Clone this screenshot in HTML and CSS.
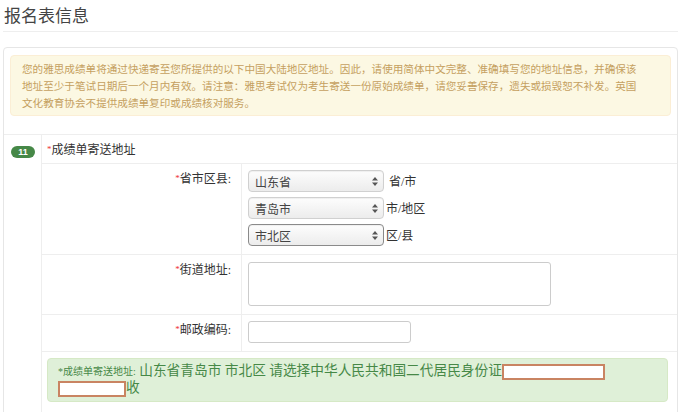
FILE: index.html
```html
<!DOCTYPE html>
<html lang="zh-CN">
<head>
  <meta charset="UTF-8" />
  <title>报名表信息</title>
  <link rel="stylesheet" href="styles.css">
</head>
<body>

<div class="page">
  <h3 class="page-title">报名表信息</h3>

  <div class="panel">
    <div class="panel-top">
      <div class="alert">
        您的雅思成绩单将通过快递寄至您所提供的以下中国大陆地区地址。因此，请使用简体中文完整、准确填写您的地址信息，并确保该<br>
        地址至少于笔试日期后一个月内有效。请注意：雅思考试仅为考生寄送一份原始成绩单，请您妥善保存，遗失或损毁恕不补发。英国<br>
        文化教育协会不提供成绩单复印或成绩核对服务。
      </div>
    </div>

    <div class="section">
      <div class="num"><span class="badge">11</span></div>
      <div class="body">
        <div class="section-title"><span class="req">*</span>成绩单寄送地址</div>

        <div class="row">
          <div class="label"><span class="req">*</span>省市区县:</div>
          <div class="field">
            <div class="line">
              <span class="select-wrap">
                <select><option>山东省</option></select>
                <svg class="arrows" width="6" height="9" viewBox="0 0 6 9"><path d="M3 0L6 3.5H0z M3 9L0 5.5H6z" fill="#555"/></svg>
              </span>
              <span class="suffix gap">省/市</span>
            </div>
            <div class="line">
              <span class="select-wrap">
                <select><option>青岛市</option></select>
                <svg class="arrows" width="6" height="9" viewBox="0 0 6 9"><path d="M3 0L6 3.5H0z M3 9L0 5.5H6z" fill="#555"/></svg>
              </span>
              <span class="suffix">市/地区</span>
            </div>
            <div class="line">
              <span class="select-wrap">
                <select class="active"><option>市北区</option></select>
                <svg class="arrows" width="6" height="9" viewBox="0 0 6 9"><path d="M3 0L6 3.5H0z M3 9L0 5.5H6z" fill="#555"/></svg>
              </span>
              <span class="suffix">区/县</span>
            </div>
          </div>
        </div>

        <div class="row">
          <div class="label"><span class="req">*</span>街道地址:</div>
          <div class="field tall">
            <textarea class="street"></textarea>
          </div>
        </div>

        <div class="row">
          <div class="label"><span class="req">*</span>邮政编码:</div>
          <div class="field">
            <input type="text" class="postcode" />
          </div>
        </div>

        <div class="preview-row">
          <div class="preview">
            <span class="preview-label">*成绩单寄送地址:</span>
            山东省青岛市 市北区 请选择中华人民共和国二代居民身份证<input type="text" class="blank wide" /><input type="text" class="blank narrow" />收
          </div>
        </div>
      </div>
    </div>
  </div>
</div>

</body>
</html>
```

FILE: styles.css
```css
body {
  margin: 0;
  font-family: "Liberation Serif", "Noto Sans CJK SC", serif;
  font-size: 12px;
  color: #333;
  background: #fff;
}
.page {
  padding: 0 7px 0 3px;
}
.page-title {
  margin: 0;
  padding: 6px 1px 4px;
  font-size: 17px;
  font-weight: normal;
  line-height: 21px;
  color: #444;
  border-bottom: 1px solid #eee;
}
.panel {
  margin-top: 15px;
  border: 1px solid #e6e6e6;
  border-radius: 4px;
  padding-bottom: 40px;
}
.panel-top {
  padding: 7px 6px 18px;
}
.alert {
  background: #fcf8e3;
  border: 1px solid #fbeed5;
  border-radius: 4px;
  padding: 5px 11px 3px;
  color: #c5a060;
  font-size: 10.6px;
  line-height: 17px;
}
.section {
  display: flex;
  border-top: 1px solid #eee;
}
.num {
  width: 37px;
  border-right: 1px solid #eee;
  padding-top: 9px;
}
.badge {
  display: inline-block;
  margin-left: 7px;
  width: 24px;
  height: 12px;
  line-height: 12px;
  border-radius: 7px;
  background: #468847;
  color: #fff;
  font-family: "Liberation Sans", sans-serif;
  font-size: 9px;
  font-weight: bold;
  text-align: center;
}
.body {
  flex: 1;
}
.section-title {
  height: 28px;
  line-height: 29px;
  padding-left: 5px;
  border-bottom: 1px solid #eee;
}
.req {
  color: #e33;
  font-size: 9px;
  vertical-align: 2px;
}
.row {
  display: grid;
  grid-template-columns: 200px 1fr;
  border-bottom: 1px solid #eee;
}
.label {
  border-right: 1px solid #eee;
  text-align: right;
  padding: 7px 10px 0 0;
  line-height: 14px;
}
.field {
  padding: 6px 6px 8px;
}
.field.tall {
  padding-top: 7px;
}
.line {
  display: flex;
  align-items: center;
  margin-bottom: 5px;
}
.line:last-child {
  margin-bottom: 0;
}
.select-wrap {
  position: relative;
  display: inline-block;
}
select {
  appearance: none;
  -webkit-appearance: none;
  width: 136px;
  height: 22px;
  padding: 0 18px 0 6px;
  border: 1px solid #d0d0d0;
  border-radius: 4px;
  background: linear-gradient(#fdfdfd, #ececec);
  box-shadow: inset 0 1px 1px rgba(0,0,0,0.06);
  font-family: "Noto Sans CJK SC", sans-serif;
  font-size: 12px;
  color: #444;
}
select.active {
  border-color: #8a8a8a;
}
.arrows {
  position: absolute;
  right: 6px;
  top: 7px;
}
.suffix {
  margin-left: 2px;
}
.suffix.gap {
  margin-left: 5px;
}
.street {
  display: block;
  width: 303px;
  height: 44px;
  box-sizing: border-box;
  border: 1px solid #ccc;
  border-radius: 3px;
  resize: none;
}
.postcode {
  display: block;
  width: 163px;
  height: 22px;
  box-sizing: border-box;
  border: 1px solid #ccc;
  border-radius: 3px;
}
.preview-row {
  padding: 6px 9px 20px 5px;
}
.preview {
  background: #dff0d8;
  border: 1px solid #d6e9c6;
  border-radius: 4px;
  padding: 4px 10px 4px;
  color: #468847;
  font-size: 13.7px;
  line-height: 16px;
}
.preview-label {
  font-size: 10px;
}
.blank {
  width: 103px;
  height: 16px;
  box-sizing: border-box;
  border: 2px solid #c98462;
  vertical-align: middle;
  padding: 0;
  margin: 0;
}
.blank.narrow {
  width: 68px;
}
```
